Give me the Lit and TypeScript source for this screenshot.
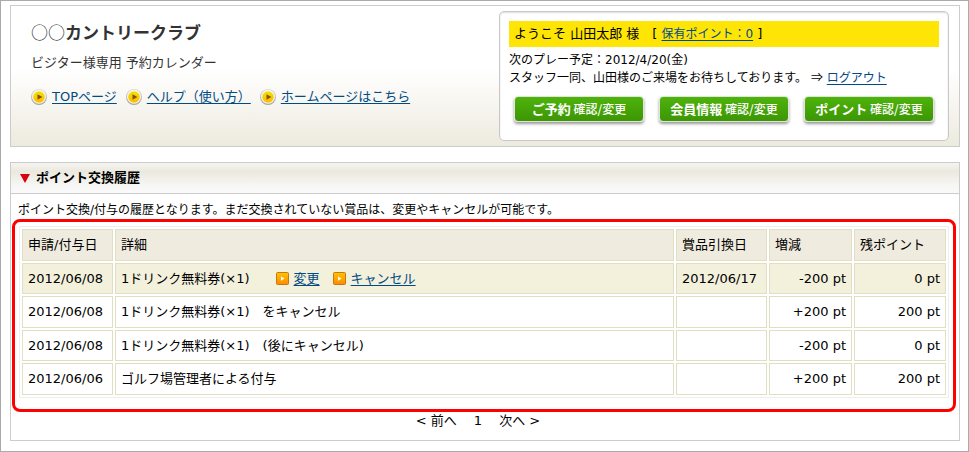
import { LitElement, html, css, svg } from "lit";
import { customElement } from "lit/decorators.js";
import { classMap } from "lit/directives/class-map.js";

interface Row {
  date: string;
  detail: string;
  exchange: string;
  change: string;
  balance: string;
  active?: boolean;
}

const ROWS: Row[] = [
  { date: "2012/06/08", detail: "1ドリンク無料券(×1)", exchange: "2012/06/17", change: "-200 pt", balance: "0 pt", active: true },
  { date: "2012/06/08", detail: "1ドリンク無料券(×1)　をキャンセル", exchange: "", change: "+200 pt", balance: "200 pt" },
  { date: "2012/06/08", detail: "1ドリンク無料券(×1)　(後にキャンセル)", exchange: "", change: "-200 pt", balance: "0 pt" },
  { date: "2012/06/06", detail: "ゴルフ場管理者による付与", exchange: "", change: "+200 pt", balance: "200 pt" },
];

const LINKS = ["TOPページ", "ヘルプ（使い方）", "ホームページはこちら"];

const BUTTONS = [
  ["ご予約", "確認/変更"],
  ["会員情報", "確認/変更"],
  ["ポイント", "確認/変更"],
];

const roundIcon = html`<svg class="round" viewBox="0 0 16 16" aria-hidden="true">
  ${svg`<defs>
    <linearGradient id="rim" x1="0" y1="0" x2="0" y2="1"><stop offset="0" stop-color="#dedbd0"/><stop offset="1" stop-color="#a5a29b"/></linearGradient>
    <linearGradient id="face" x1="0" y1="0" x2="0" y2="1"><stop offset="0" stop-color="#eee30a"/><stop offset="1" stop-color="#ffba00"/></linearGradient>
  </defs>
  <circle cx="8" cy="8" r="8" fill="url(#rim)"/>
  <circle cx="8" cy="7.8" r="7" fill="#f8f7f0"/>
  <circle cx="8" cy="8" r="5.8" fill="url(#face)"/>
  <path d="M6.5 5.2 11.4 8 6.5 10.8Z" fill="#875009"/>`}
</svg>`;

const squareIcon = html`<svg class="square" viewBox="0 0 13 13" aria-hidden="true">
  ${svg`<defs><linearGradient id="sq" x1="0" y1="0" x2="0" y2="1"><stop offset="0" stop-color="#ffc400"/><stop offset="1" stop-color="#ff8a00"/></linearGradient></defs>
  <rect x=".5" y=".5" width="12" height="12" rx="1" fill="url(#sq)" stroke="#c27a12"/>
  <path d="M5 4.5 8.6 6.5 5 8.7Z" fill="#fff"/>`}
</svg>`;

@customElement("app-root")
export class AppRoot extends LitElement {
  static styles = css`
    :host {
      display: block;
      box-sizing: border-box;
      min-height: 100vh;
      padding: 4px 8px 10px 9px;
      border: 1px solid #aaa;
      background: #fff;
      color: #000;
      font: 13px/18px "DejaVu Sans", "Noto Sans CJK JP", sans-serif;
    }
    * { box-sizing: border-box; }
    h1, h2, p { margin: 0; }
    a { color: #004b85; text-decoration: underline; text-underline-offset: 2px; }
    svg { display: block; flex: none; }

    .header {
      display: flex;
      justify-content: space-between;
      padding: 5px 10px 5px 20px;
      border: 1px solid #ccc;
      background: linear-gradient(#fff 45%, #edeade);
    }
    .brand { color: #333; padding-top: 8px; }
    .title {
      font: bold 17px/26px "Noto Sans CJK JP", sans-serif;
    }
    .rings { font-weight: normal; }
    .subtitle { margin-top: 9px; }
    .nav { display: flex; gap: 9px; margin-top: 16px; }
    .item { display: flex; align-items: center; gap: 5px; white-space: nowrap; }
    .round { width: 16px; height: 16px; }

    .member {
      width: 450px;
      padding: 9px;
      border: 1px solid #c8c8c8;
      border-radius: 5px;
      background: #fff;
      box-shadow: inset 0 1px 2px #ddd;
      font-size: 12px;
    }
    .welcome {
      padding: 4px 5px;
      background: #ffe506;
      font-size: 13px;
      white-space: pre;
    }
    .points { font-size: 12px; }
    .next { padding-top: 4px; white-space: nowrap; }
    .arrow { font-family: "Noto Sans CJK JP", sans-serif; line-height: 1; }
    .actions { display: flex; gap: 15px; padding: 9px 5px; }
    .action {
      width: 130px;
      height: 26px;
      padding: 0;
      border: 1px solid #dfe5da;
      border-radius: 4px;
      background: linear-gradient(#4eb30b, #3c9604);
      box-shadow: 0 2px 3px #999;
      color: #fff;
      font: 500 12px/20px "Noto Sans CJK JP", sans-serif;
      white-space: nowrap;
    }
    .strong { font-size: 13px; font-weight: bold; }

    .history {
      margin-top: 15px;
      border: 1px solid #ccc;
    }
    .heading {
      display: flex;
      align-items: center;
      gap: 6px;
      height: 31px;
      padding-left: 9px;
      border-bottom: 1px solid #ccc;
      background: linear-gradient(#f5f4f0, #ebe9de 28%, #f6f6f4 75%, #fafafa);
      font-size: 13px;
    }
    .mark { width: 10px; height: 9px; }
    .note { padding: 7px 7px 0; font-size: 12px; }
    .frame {
      margin: 0 3px 0 1px;
      padding: 4px 4px 11px;
      border: 3px solid #f00;
      border-radius: 8px;
    }
    .table {
      width: 100%;
      table-layout: fixed;
      border: 1px solid #eee;
      border-collapse: separate;
      border-spacing: 2px;
    }
    th, td {
      height: 32px;
      padding: 0 5px;
      border: 1px solid #e0dfc3;
      text-align: left;
      font-weight: normal;
      white-space: nowrap;
    }
    th { background: #efebde; }
    tbody tr:nth-child(odd) td { height: 31px; }
    .active td { background: #f3f1dc; }
    .date { width: 91px; }
    .change { width: 83px; }
    .balance { width: 92px; }
    td.num { text-align: right; }
    .detail { display: flex; align-items: center; }
    .ops { display: flex; gap: 13px; margin-left: 26px; }
    .square { width: 13px; height: 13px; }

    .pager {
      display: flex;
      justify-content: center;
      gap: 17px;
      padding: 0 14px 10px 0;
    }
  `;

  private renderRow(r: Row) {
    return html`<tr class=${classMap({ active: !!r.active })}>
      <td>${r.date}</td>
      <td>
        <div class="detail">
          <span>${r.detail}</span>
          ${r.active
            ? html`<span class="ops">
                <span class="item">${squareIcon}<a href="#">変更</a></span>
                <span class="item">${squareIcon}<a href="#">キャンセル</a></span>
              </span>`
            : ""}
        </div>
      </td>
      <td>${r.exchange}</td>
      <td class="num">${r.change}</td>
      <td class="num">${r.balance}</td>
    </tr>`;
  }

  render() {
    return html`
      <header class="header">
        <div class="brand">
          <h1 class="title"><span class="rings">○○</span>カントリークラブ</h1>
          <p class="subtitle">ビジター様専用 予約カレンダー</p>
          <nav class="nav">
            ${LINKS.map((l) => html`<span class="item">${roundIcon}<a href="#">${l}</a></span>`)}
          </nav>
        </div>
        <div class="member">
          <p class="welcome">ようこそ 山田太郎 様　[ <a class="points" href="#">保有ポイント：0</a> ]</p>
          <p class="next">次のプレー予定：2012/4/20(金)<br />スタッフ一同、山田様のご来場をお待ちしております。 <span class="arrow">⇒</span> <a href="#">ログアウト</a></p>
          <div class="actions">
            ${BUTTONS.map(([a, b]) => html`<button class="action" type="button"><span class="strong">${a}</span> ${b}</button>`)}
          </div>
        </div>
      </header>
      <main class="history">
        <h2 class="heading">
          <svg class="mark" viewBox="0 0 10 9" aria-hidden="true"><path d="M0 0H10L5 9Z" fill="#d7000f" /></svg>
          ポイント交換履歴
        </h2>
        <p class="note">ポイント交換/付与の履歴となります。まだ交換されていない賞品は、変更やキャンセルが可能です。</p>
        <div class="frame">
          <table class="table">
            <thead>
              <tr>
                <th class="date" scope="col">申請/付与日</th>
                <th scope="col">詳細</th>
                <th class="date" scope="col">賞品引換日</th>
                <th class="change" scope="col">増減</th>
                <th class="balance" scope="col">残ポイント</th>
              </tr>
            </thead>
            <tbody>${ROWS.map((r) => this.renderRow(r))}</tbody>
          </table>
        </div>
        <nav class="pager"><span>&lt; 前へ</span><span>1</span><span>次へ &gt;</span></nav>
      </main>
    `;
  }
}
